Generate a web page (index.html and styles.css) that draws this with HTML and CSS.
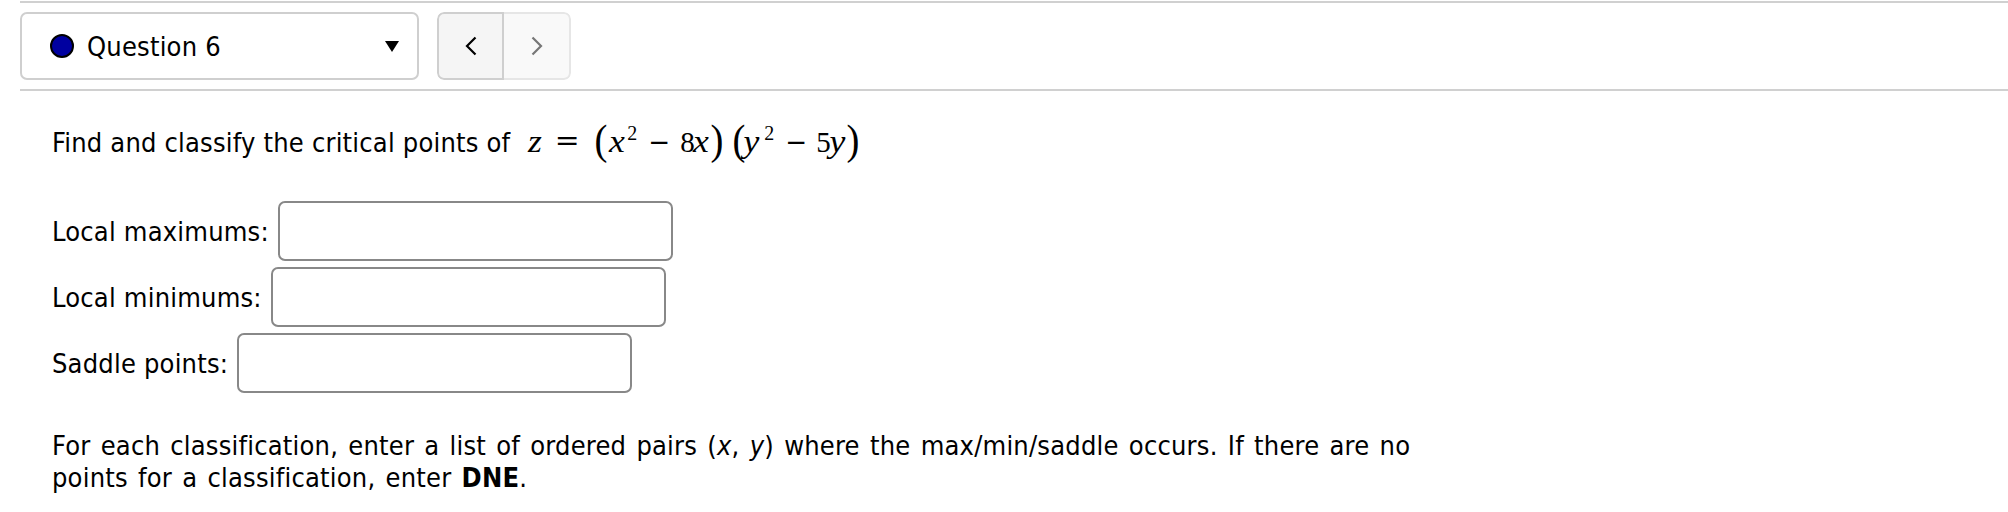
FILE: index.html
```html
<!DOCTYPE html>
<html lang="en">
<head>
<meta charset="utf-8">
<title>Question 6</title>
<link rel="stylesheet" href="styles.css">
</head>
<body>
<div class="page">
  <div class="top-rule"></div>
  <div class="header">
    <div class="q-select">
      <span class="q-dot"></span>
      <span class="q-label">Question 6</span>
      <span class="q-caret"></span>
    </div>
    <div class="q-nav">
      <button class="nav-btn prev" aria-label="Previous question">
        <svg width="12" height="20" viewBox="0 0 12 20"><path d="M10.5 1.5 L2 10 L10.5 18.5" fill="none" stroke="#000" stroke-width="2.2"/></svg>
      </button>
      <button class="nav-btn next" aria-label="Next question">
        <svg width="12" height="20" viewBox="0 0 12 20"><path d="M1.5 1.5 L10 10 L1.5 18.5" fill="none" stroke="#777" stroke-width="2.2"/></svg>
      </button>
    </div>
  </div>
  <div class="divider"></div>
  <div class="question">
    <p class="prompt">Find and classify the critical points of <span class="math"><i class="a v w16">z</i><span class="a rel">=</span><span class="a par ml14">(</span><i class="a v w18 ml2">x</i><sup class="a sup ml1">2</sup><span class="a op">−</span><span class="a num ml10">8</span><i class="a v w18">x</i><span class="a par">)</span><span class="a par ml10">(</span><i class="a v w17 mln1">y</i><sup class="a sup ml4">2</sup><span class="a op">−</span><span class="a num ml9">5</span><i class="a v w17 ml1">y</i><span class="a par">)</span></span></p>
    <div class="answers">
      <label class="row"><span class="lbl">Local maximums:</span><input class="ans" type="text"></label>
      <label class="row"><span class="lbl">Local minimums:</span><input class="ans" type="text"></label>
      <label class="row"><span class="lbl">Saddle points:</span><input class="ans" type="text"></label>
    </div>
    <p class="note">For each classification, enter a list of ordered pairs (<i>x</i>, <i>y</i>) where the max/min/saddle occurs. If there are no points for a classification, enter <b>DNE</b>.</p>
  </div>
</div>
</body>
</html>
```
FILE: styles.css
```css
html, body {
  margin: 0;
  padding: 0;
  background: #fff;
}
body {
  font-family: "DejaVu Sans Condensed", "DejaVu Sans", sans-serif;
  font-stretch: condensed;
  font-size: 27px;
  letter-spacing: 0.2px;
  color: #000;
  overflow: hidden;
}
.page {
  padding-left: 20px;
}
.top-rule {
  margin-top: 1px;
  height: 2px;
  background: #d0d0d0;
}
.header {
  display: flex;
  align-items: stretch;
  margin-top: 9px;
  height: 68px;
  gap: 18px;
}
.q-select {
  box-sizing: border-box;
  width: 399px;
  border: 2px solid #cfcfcf;
  border-radius: 7px;
  display: flex;
  align-items: center;
  padding-left: 28px;
  padding-right: 18px;
}
.q-dot {
  box-sizing: border-box;
  width: 24px;
  height: 24px;
  border-radius: 50%;
  background: #0000a0;
  border: 2px solid #000;
  flex: none;
}
.q-label {
  margin-left: 13px;
  flex: 1;
}
.q-caret {
  width: 0;
  height: 0;
  border-left: 7px solid transparent;
  border-right: 7px solid transparent;
  border-top: 11px solid #000;
}
.q-nav {
  display: flex;
  border-radius: 7px;
  overflow: hidden;
}
.nav-btn {
  box-sizing: border-box;
  width: 67px;
  height: 68px;
  margin: 0;
  padding: 0;
  display: flex;
  align-items: center;
  justify-content: center;
  cursor: pointer;
}
.nav-btn.prev {
  background: #f5f5f5;
  border: 2px solid #cfcfcf;
  border-radius: 7px 0 0 7px;
}
.nav-btn.next {
  background: #f9f9f9;
  border: 2px solid #e6e6e6;
  border-left: none;
  border-radius: 0 7px 7px 0;
}
.divider {
  margin-top: 9px;
  height: 2px;
  background: #d0d0d0;
}
.question {
  padding-left: 32px;
}
.prompt {
  margin: 30px 0 0;
  line-height: 42px;
}
/* math, typeset atom by atom */
.math {
  font-family: "Liberation Serif", "DejaVu Serif", serif;
  font-size: 31px;
  letter-spacing: 0;
  margin-left: 9px;
}
.math .a {
  display: inline-block;
  text-align: center;
  line-height: 30px;
}
.math .v {
  font-style: italic;
}
.math .w16 { width: 16px; }
.math .w17 { width: 17px; }
.math .w18 { width: 18px; }
.math .v.w16, .math .v.w17, .math .v.w18 {
  transform: scaleX(1.15);
}
.math .num {
  width: 12px;
  font-size: 29px;
}
.math .sup {
  width: 10px;
  font-size: 20px;
  line-height: 20px;
  vertical-align: 12px;
}
.math .rel {
  font-family: "DejaVu Sans", sans-serif;
  font-size: 33px;
  width: 26px;
  margin-left: 11px;
  transform: scaleY(0.85);
}
.math .op {
  font-family: "DejaVu Sans", sans-serif;
  font-size: 29px;
  width: 22px;
  margin-left: 11px;
}
.math .par {
  font-size: 43px;
  width: 12px;
  vertical-align: -2px;
  transform: scaleX(0.9);
}
.math .ml1 { margin-left: 1px; }
.math .ml2 { margin-left: 2px; }
.math .ml4 { margin-left: 4px; }
.math .ml9 { margin-left: 9px; }
.math .ml10 { margin-left: 10px; }
.math .ml14 { margin-left: 14px; }
.math .mln1 { margin-left: -1px; }
.answers {
  margin-top: 37px;
  display: flex;
  flex-direction: column;
  gap: 6px;
}
.row {
  display: flex;
  align-items: center;
  gap: 9px;
}
.ans {
  box-sizing: border-box;
  width: 395px;
  height: 60px;
  border: 2px solid #888;
  border-radius: 7px;
  margin: 0;
  background: #fff;
}
.note {
  margin: 37px 0 0;
  line-height: 32px;
  width: 1400px;
  word-spacing: 2.3px;
}
```
